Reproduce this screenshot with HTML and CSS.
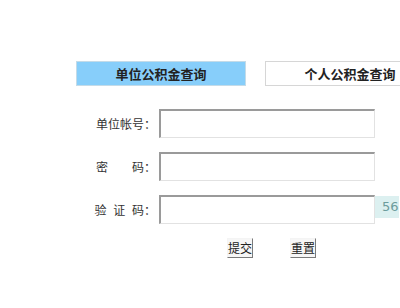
FILE: index.html
```html
<!DOCTYPE html>
<html lang="zh-CN">
<head>
    <meta charset="UTF-8">
    <title>公积金查询</title>
    <link rel="stylesheet" href="styles.css">
</head>
<body>
    <div class="page">
        <div class="tabs">
            <div class="tab tab-active">单位公积金查询</div>
            <div class="tab">个人公积金查询</div>
        </div>
        <form class="query-form">
            <div class="row">
                <label class="label">单位帐号：</label>
                <input class="field" type="text">
            </div>
            <div class="row">
                <label class="label">密&emsp;&emsp;码：</label>
                <input class="field" type="password">
            </div>
            <div class="row">
                <label class="label label-spaced">验 证 码：</label>
                <input class="field" type="text">
                <span class="captcha">56</span>
            </div>
            <div class="buttons">
                <button class="btn" type="button">提交</button>
                <button class="btn" type="reset">重置</button>
            </div>
        </form>
    </div>
</body>
</html>
```

FILE: styles.css
```css
body{
    margin: 0;
    background-color: white;
    color: #333;
    font-family: "Noto Sans CJK SC", "Liberation Sans", sans-serif;
    font-size: 12px;
}
.page{
    width: 400px;
    height: 308px;
    overflow: hidden;
    box-sizing: border-box;
    padding: 61px 0 0 76px;
}
.tabs{
    display: flex;
    gap: 19px;
}
.tab{
    flex: none;
    width: 168px;
    height: 23px;
    border: 1px solid #d6d6d6;
    background-color: white;
    text-align: center;
    line-height: 23px;
    font-size: 13px;
    font-weight: bold;
    color: #222;
}
.tab-active{
    background-color: #87cefa;
    border-color: #c4dbe8;
}
.query-form{
    margin-top: 23px;
}
.row{
    display: flex;
    align-items: center;
    height: 29px;
    margin-bottom: 14px;
}
.label{
    flex: none;
    width: 80px;
    text-align: right;
    margin-right: 3px;
    white-space: nowrap;
}
.label-spaced{
    word-spacing: 4px;
}
.field{
    flex: none;
    box-sizing: border-box;
    width: 216px;
    height: 29px;
    margin: 0;
    padding: 0 4px;
    border: 1px solid #e2e2e2;
    border-top: 2px solid #9a9a9a;
    border-left: 2px solid #9a9a9a;
    background-color: white;
    outline: none;
}
.captcha{
    flex: none;
    align-self: flex-start;
    margin-top: 1px;
    height: 22px;
    line-height: 22px;
    padding: 0 0 0 7px;
    background-color: #dcf0f0;
    color: #6c9c9c;
    font-family: "DejaVu Sans", sans-serif;
    font-size: 13px;
}
.buttons{
    display: flex;
    gap: 37px;
    margin-left: 151px;
    margin-top: 5px;
}
.btn{
    box-sizing: border-box;
    width: 26px;
    height: 20px;
    padding: 0;
    border: 1px solid;
    border-color: #f4f4f4 #7a7a7a #7a7a7a #f4f4f4;
    background-color: #f6f6f6;
    color: #222;
    font-family: "Noto Sans CJK SC", sans-serif;
    font-size: 12px;
    line-height: 18px;
    cursor: pointer;
}
```
